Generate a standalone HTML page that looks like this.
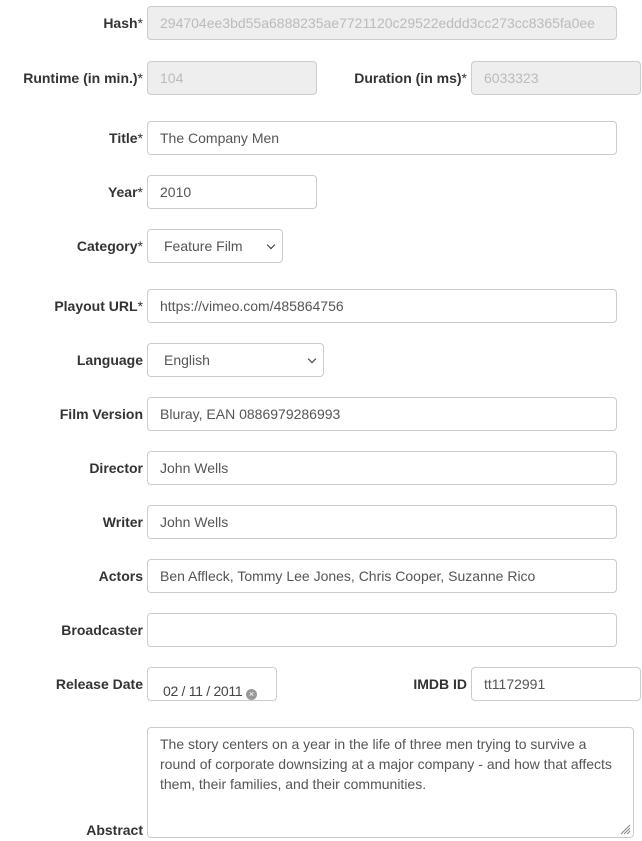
<!DOCTYPE html>
<html><head><style>
body{margin:0;width:642px;height:841px;background:#fff;font-family:"Liberation Sans",Arial,sans-serif;font-size:14px;color:#555;position:relative;overflow:hidden}
.l{position:absolute;font-weight:bold;color:#333;text-align:right;line-height:20px}
.l span{font-weight:normal}
.i{position:absolute;box-sizing:border-box;border:1px solid #ccc;border-radius:4px;height:34px;padding:0 12px;line-height:32px;background:#fff;white-space:nowrap;overflow:hidden}
.d{background:#eee;color:#bbb}
.s::after{content:"";position:absolute;right:8px;top:12px;width:5px;height:5px;border-right:1.5px solid #333;border-bottom:1.5px solid #333;transform:rotate(45deg)}
.s{padding-left:16px}
</style></head><body>
<div class="l" style="right:499px;top:13px">Hash<span>*</span></div>
<div class="i d" style="left:147px;top:6px;width:470px">294704ee3bd55a6888235ae7721120c29522eddd3cc273cc8365fa0ee</div>
<div class="l" style="right:499px;top:68px">Runtime (in min.)<span>*</span></div>
<div class="i d" style="left:147px;top:61px;width:170px">104</div>
<div class="l" style="right:175px;top:68px">Duration (in ms)<span>*</span></div>
<div class="i d" style="left:471px;top:61px;width:170px">6033323</div>
<div class="l" style="right:499px;top:128px">Title<span>*</span></div>
<div class="i" style="left:147px;top:121px;width:470px">The Company Men</div>
<div class="l" style="right:499px;top:182px">Year<span>*</span></div>
<div class="i" style="left:147px;top:175px;width:170px">2010</div>
<div class="l" style="right:499px;top:236px">Category<span>*</span></div>
<div class="i s" style="left:147px;top:229px;width:136px">Feature Film</div>
<div class="l" style="right:499px;top:296px">Playout URL<span>*</span></div>
<div class="i" style="left:147px;top:289px;width:470px">https://vimeo.com/485864756</div>
<div class="l" style="right:499px;top:350px">Language</div>
<div class="i s" style="left:147px;top:343px;width:177px">English</div>
<div class="l" style="right:499px;top:404px">Film Version</div>
<div class="i" style="left:147px;top:397px;width:470px">Bluray, EAN 0886979286993</div>
<div class="l" style="right:499px;top:458px">Director</div>
<div class="i" style="left:147px;top:451px;width:470px">John Wells</div>
<div class="l" style="right:499px;top:512px">Writer</div>
<div class="i" style="left:147px;top:505px;width:470px">John Wells</div>
<div class="l" style="right:499px;top:566px">Actors</div>
<div class="i" style="left:147px;top:559px;width:470px">Ben Affleck, Tommy Lee Jones, Chris Cooper, Suzanne Rico</div>
<div class="l" style="right:499px;top:620px">Broadcaster</div>
<div class="i" style="left:147px;top:613px;width:470px"></div>
<div class="l" style="right:499px;top:674px">Release Date</div>
<div class="i" style="left:147px;top:667px;width:130px;padding-left:15px;line-height:46px;color:#444;letter-spacing:-0.3px">02 / 11 / 2011 <span style="display:inline-block;width:11px;height:11px;border-radius:50%;background:#999;color:#fff;font-size:9px;line-height:11px;text-align:center;vertical-align:-1px;letter-spacing:0">×</span></div>
<div class="l" style="right:175px;top:674px">IMDB ID</div>
<div class="i" style="left:471px;top:667px;width:170px">tt1172991</div>
<div class="l" style="right:499px;top:820px">Abstract</div>
<div class="i" style="left:147px;top:727px;width:487px;height:111px;white-space:normal;line-height:20px;padding-top:6px">The story centers on a year in the life of three men trying to survive a round of corporate downsizing at a major company - and how that affects them, their families, and their communities.
<svg style="position:absolute;right:2px;bottom:2px" width="12" height="12"><path d="M11 2L2 11M11 5L5 11M11 8L8 11" stroke="#888" stroke-width="1"/></svg></div>
</body></html>
